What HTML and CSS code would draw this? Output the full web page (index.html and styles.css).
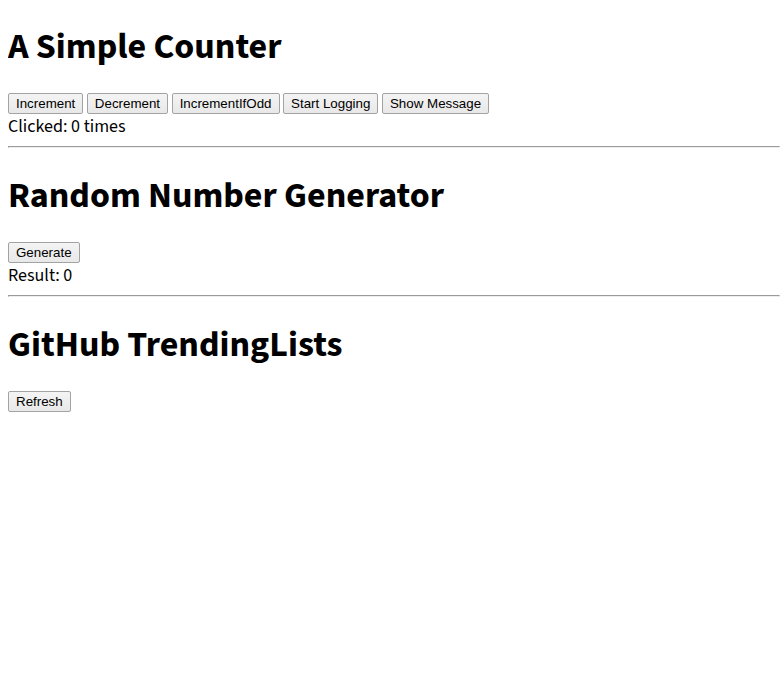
FILE: index.html
```html
<!DOCTYPE html>
<html>
<head>
<meta charset="utf-8">
<link rel="stylesheet" href="styles.css">
</head>
<body>
<div class="app">
  <div class="counter">
    <h1 class="title">A Simple Counter</h1>
    <div class="actions">
      <button class="btn">Increment</button>
      <button class="btn">Decrement</button>
      <button class="btn">IncrementIfOdd</button>
      <button class="btn">Start Logging</button>
      <button class="btn">Show Message</button>
    </div>
    <div class="info">Clicked: 0 times</div>
  </div>
  <hr class="sep">
  <div class="random">
    <h1 class="title">Random Number Generator</h1>
    <div class="actions">
      <button class="btn">Generate</button>
    </div>
    <div class="info">Result: 0</div>
  </div>
  <hr class="sep">
  <div class="trending">
    <h1 class="title">GitHub TrendingLists</h1>
    <div class="actions">
      <button class="btn">Refresh</button>
    </div>
  </div>
</div>
</body>
</html>
```
FILE: styles.css
```css
body {
  margin: 0 1px 8px 8px;
  font-family: "Source Sans Pro", "Source Sans 3", "Open Sans", sans-serif;
  font-size: 18px;
  line-height: 23px;
  color: #000;
  background: #fff;
}
.app {
  padding-top: 0.1px;
}
.title {
  font-size: 36px;
  font-weight: 700;
  line-height: 45px;
  margin: 24px 0 24px;
}
.actions {
  display: flex;
  gap: 3.6px;
}
.btn {
  font-family: "Liberation Sans", Arial, sans-serif;
  font-size: 13.333px;
  line-height: 15px;
  color: #000;
  padding: 2px 7px;
  border: 1px solid #a3a3a3;
  border-radius: 2px;
  background: linear-gradient(#f4f4f4, #e8e8e8);
}
.info {
  padding-top: 2px;
  line-height: 22px;
}
.sep {
  margin: 8px 0;
}
.random .title,
.trending .title {
  margin-top: 25px;
}
```
